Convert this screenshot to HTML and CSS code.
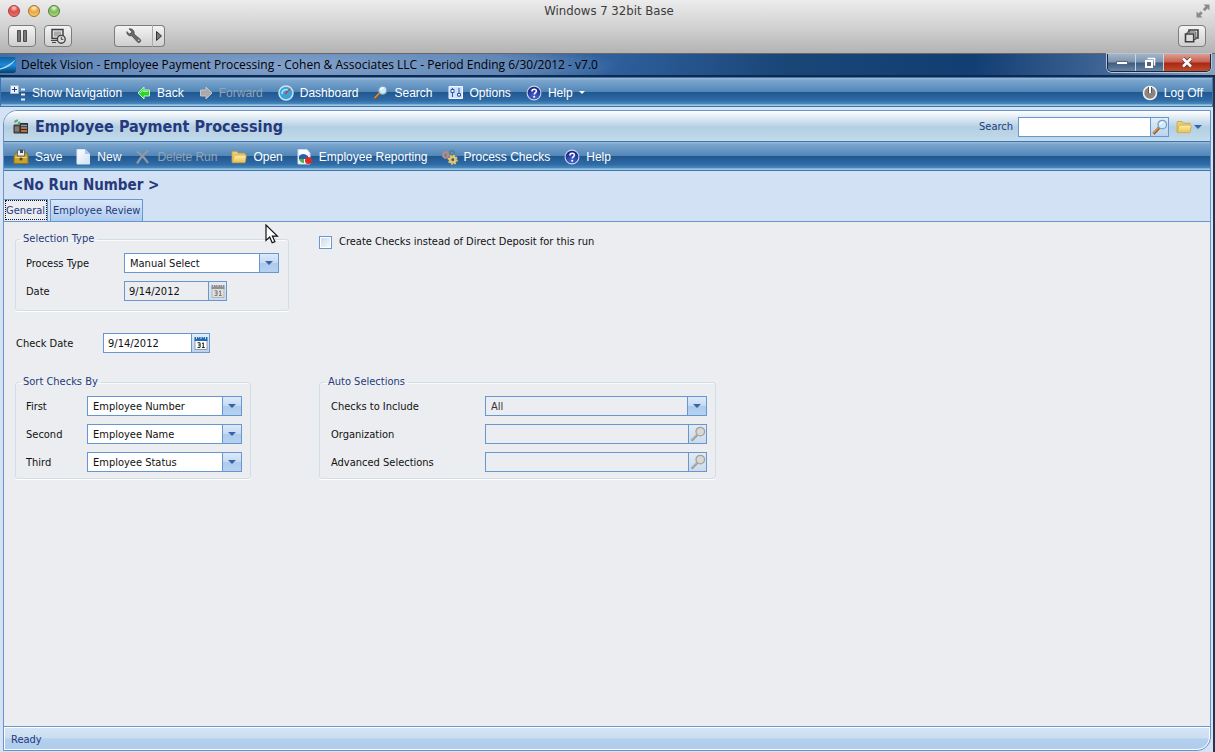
FILE: index.html
```html
<!DOCTYPE html>
<html lang="en">
<head>
<meta charset="utf-8">
<title>Employee Payment Processing</title>
<link rel="stylesheet" href="styles.css">
</head>
<body>
<svg class="defs" width="0" height="0" aria-hidden="true">
  <defs>
    <radialGradient id="blueBall" cx=".5" cy=".8" r=".8"><stop offset="0" stop-color="#4a6ad8"/><stop offset="1" stop-color="#101c78"/></radialGradient>
    <linearGradient id="folderFill" x1="0" y1="0" x2="0" y2="1"><stop offset="0" stop-color="#fdf0a8"/><stop offset="1" stop-color="#e9bf52"/></linearGradient>
    <linearGradient id="sheetFill" x1="0" y1="0" x2="1" y2="1"><stop offset="0" stop-color="#fff"/><stop offset="1" stop-color="#cfe0f2"/></linearGradient>
    <linearGradient id="logoFill" x1="0" y1="0" x2="0" y2="1"><stop offset="0" stop-color="#0f5f9c"/><stop offset=".5" stop-color="#1c8bdc"/><stop offset="1" stop-color="#04406e"/></linearGradient>
    <symbol id="help" viewBox="0 0 16 16"><circle cx="8" cy="8" r="6.9" fill="url(#blueBall)" stroke="#cfd4e4" stroke-width="1.1"/><path d="M5.9 6.4c0-3 4.5-2.9 4.5-.4 0 1.7-2.1 1.7-2.1 3.6" fill="none" stroke="#fff" stroke-width="1.5"/><circle cx="8.2" cy="11.8" r="1" fill="#fff"/></symbol>
    <symbol id="glass" viewBox="0 0 16 16"><path d="M1.5 14.7 7.2 8.8" stroke="#8e5524" stroke-width="2.8"/><path d="M1.5 14 6.7 8.6" stroke="#e39a4e" stroke-width="1.3"/><circle cx="10.3" cy="5.6" r="4.3" fill="#c9ecff" stroke="#7f9fb8" stroke-width="1.3"/><path d="M7.8 5.4q.7-2.4 3.2-2.2" fill="none" stroke="#fff" stroke-width="1.4"/></symbol>
    <symbol id="glassOff" viewBox="0 0 16 16"><path d="M1.5 14.7 7.2 8.8" stroke="#999" stroke-width="2.4"/><path d="M1.5 14 6.7 8.6" stroke="#c6c6c6" stroke-width="1"/><circle cx="10.3" cy="5.6" r="4.3" fill="#d8d8d6" stroke="#a2a2a0" stroke-width="1.3"/></symbol>
    <symbol id="folder" viewBox="0 0 16 14"><path d="M1 12V2.500Q1 1.500 2 1.500h4l1.400 1.700h6q.8 0 .8 1V6" fill="#e9cf72" stroke="#c9a33e" stroke-width=".8"/><path d="M1.200 12.700 3 5.800q.2-.7 1-.7h10.400q1 0 .8 1l-.9 5.800q-.1.8-1 .8z" fill="url(#folderFill)" stroke="#cfa544" stroke-width=".8"/></symbol>
    <symbol id="cal" viewBox="0 0 14 15"><path d="M1 3.500h12v10H1z" fill="#fff" stroke="#7c8796" stroke-width=".8"/><path d="M.5 1h13v4H.5z" fill="#236ab8"/><path d="M2.500 1v2M4.700 1v1M7 1v2M9.300 1v1M11.500 1v2" stroke="#c5daf0"/><path d="M3.500 6.800h2.600v4.600H3.500M4.200 9h1.900M8 7.700l1.300-.9v5M8 11.500h2.700" fill="none" stroke="#222"/></symbol>
    <symbol id="calOff" viewBox="0 0 14 15"><path d="M1 3.500h12v10H1z" fill="#e0e0df" stroke="#aaa" stroke-width=".8"/><path d="M.5 1h13v4H.5z" fill="#909090"/><path d="M2.500 1v2M4.700 1v1M7 1v2M9.300 1v1M11.500 1v2" stroke="#c5c5c5"/><path d="M3.500 6.800h2.600v4.600H3.500M4.200 9h1.900M8 7.700l1.300-.9v5M8 11.500h2.700" fill="none" stroke="#777"/></symbol>
  </defs>
</svg>

<div class="host">
  <header class="host-head">
    <div class="host-title">
      <span class="lights">
        <button class="light red" aria-label="Close"></button>
        <button class="light amber" aria-label="Minimize"></button>
        <button class="light green" aria-label="Zoom"></button>
      </span>
      <span class="host-name">Windows 7 32bit Base</span>
      <button class="expand" aria-label="Full screen"><svg width="14" height="14" viewBox="0 0 14 14"><path d="M7.500.5h6v6l-2-2-2.700 2.700-2-2 2.700-2.700zM.5 7.500v6h6l-2-2 2.200-2.200-2-2-2.200 2.200z" fill="#8a8a8a"/></svg></button>
    </div>
    <div class="host-tools">
      <button class="host-btn" aria-label="Pause"><svg width="12" height="14"><path d="M1.500 1.500h3v11h-3zM7.500 1.500h3v11h-3z" fill="#777" stroke="#4c4c4c"/></svg></button>
      <button class="host-btn" aria-label="Snapshots"><svg width="16" height="16" viewBox="0 0 16 16"><path d="M2 1.500h11v9H2z" fill="#ddd" stroke="#3c3c3c" stroke-width="1.400"/><path d="M4 3.500h7v5H4z" fill="#aaa"/><path d="M1 12.500h6M2 14.500h4" stroke="#444"/><circle cx="11.300" cy="11.300" r="3.900" fill="#ddd" stroke="#444" stroke-width="1.400"/><path d="M11.300 9v2.400h2" fill="none" stroke="#444"/></svg></button>
      <span class="host-pair">
        <button class="host-btn settings" aria-label="Settings"><svg width="16" height="16" viewBox="0 0 16 16"><path d="M3 .9 5.700 3.600 5 5.300l-1.800.6L.8 3.600C.6 6.400 2.800 8.500 5.800 7.800l5.400 6c1.900 2.100 4.900-.5 2.900-2.600L8 6.100C8.900 2.800 6.200.2 3 .9z" fill="#696969" stroke="#444" stroke-width=".7"/><circle cx="12.700" cy="12.300" r=".8" fill="#ddd"/></svg></button>
        <button class="host-btn more" aria-label="More settings"><svg width="6" height="10"><path d="M.5.5v9l5-4.500z" fill="#777" stroke="#333"/></svg></button>
      </span>
      <button class="host-btn unity" aria-label="Windows"><svg width="16" height="14" viewBox="0 0 16 14"><path d="M5 3.500V1h9v8h-2.500" fill="none" stroke="#3d3d3d" stroke-width="1.600"/><path d="M3.200 5V3h8.600v7.500H10" fill="none" stroke="#555"/><path d="M1.500 5h8.200v7.800H1.500z" fill="#ddd" stroke="#3d3d3d" stroke-width="1.600"/></svg></button>
    </div>
  </header>

  <div class="win-title">
    <svg class="logo" width="16" height="16" viewBox="0 0 16 16"><path d="M0 0h13q3 0 3 3v10q0 3-3 3H0z" fill="url(#logoFill)"/><path d="M0 11.500Q9 8.500 16 2 11 10.500 0 12.800z" fill="#a9dcfa"/></svg>
    <span class="win-name">Deltek Vision - Employee Payment Processing - Cohen &amp; Associates LLC - Period Ending 6/30/2012 - v7.0</span>
    <div class="win-btns">
      <button aria-label="Minimize"><svg width="12" height="6"><path d="M.5 1.500h11v3H.5z" fill="#fff" stroke="#536579"/></svg></button>
      <button aria-label="Restore"><svg width="12" height="12"><path d="M3.500 1.500h7v7" fill="none" stroke="#fff" stroke-width="1.500"/><path d="M2 4h6v6H2z" fill="#53657c" stroke="#fff" stroke-width="2"/></svg></button>
      <button class="close" aria-label="Close window"><svg width="12" height="11"><path d="m2 1.500 8 8m0-8-8 8" stroke="#62322e" stroke-width="4"/><path d="m2 1.500 8 8m0-8-8 8" stroke="#fff" stroke-width="2.500"/></svg></button>
    </div>
  </div>

  <div class="app">
    <nav class="bar main-bar">
      <button><svg width="16" height="16"><path d="M.5.500h8v8h-8z" fill="#eef3fb" stroke="#9eb2cc"/><path d="M4.500 2v5M2 4.500h5" stroke="#223f90"/><path d="M11 4.500h4M11 9.500h4M11 14.500h4" stroke="#e8edf3" stroke-width="2"/></svg>Show Navigation</button>
      <button><svg width="14" height="14" viewBox="0 0 14 14"><path d="M1 7 7 1v3h5.500v6H7v3z" fill="#2bd52f" stroke="#c4f2bd"/><path d="m3 7 3-3v1.500h5" fill="none" stroke="#9bf795"/></svg>Back</button>
      <button disabled><svg width="14" height="14" viewBox="0 0 14 14"><path d="M13 7 7 1v3H1.500v6H7v3z" fill="#aaa" stroke="#c4c4c4"/></svg>Forward</button>
      <button><svg width="16" height="16" viewBox="0 0 16 16"><circle cx="8" cy="8" r="7" fill="#35a5dc" stroke="#cce4ee" stroke-width="1.500"/><path d="M4 9a4 4 0 0 1 7-3" fill="none" stroke="#a4e5ff" stroke-width="1.500"/><path d="m7 9 5-5" stroke="#d33" stroke-width="1.500"/></svg>Dashboard</button>
      <button><svg width="15" height="15"><use href="#glass"/></svg>Search</button>
      <button><svg width="16" height="16"><path d="M1 1.500h13.500v12H1z" fill="#cfe0f8" stroke="#f2f7ff"/><path d="M4.500 3v9M11 3v9" stroke="#2c57a8"/><path d="M3 4.500h3v3H3zM9.500 8.500h3v2.500h-3z" fill="#fff" stroke="#2b54a9"/></svg>Options</button>
      <button><svg width="16" height="16"><use href="#help"/></svg>Help<i class="caret"></i></button>
      <button class="end"><svg width="16" height="16"><circle cx="8" cy="8" r="6.500" fill="#8a8580" stroke="#f4f0e8" stroke-width="1.600"/><path d="M8 2v6" stroke="#5a5653" stroke-width="4"/><path d="M8 1v7" stroke="#fff" stroke-width="2"/></svg>Log Off</button>
    </nav>

    <main class="panel">
      <div class="panel-head">
        <svg width="16" height="16"><path d="M1 6h6v8H1z" fill="#6c6258" stroke="#37302b"/><path d="M7 4h8v10.500H7z" fill="#36302e"/><path d="M2 3.500q0-2 3-2M5 5l2-2" fill="none" stroke="#5ba968" stroke-width="2"/><path d="M8 6.500h6" stroke="#6aa5e8" stroke-width="1.500"/><path d="M8 9h6M8 12h6" stroke="#e38343" stroke-width="1.500"/><path d="M3 8v4M5 8v4" stroke="#9b958c"/></svg>
        <h1>Employee Payment Processing</h1>
        <label for="find">Search</label>
        <span class="field find"><input id="find" type="text"><button aria-label="Find"><svg width="16" height="16"><use href="#glass"/></svg></button></span>
        <button class="fav" aria-label="Folders"><svg width="16" height="14"><use href="#folder"/></svg><i class="caret"></i></button>
      </div>
      <div class="bar">
        <button><svg width="16" height="16"><path d="M1 6.500 3 4h11l1 2.500v8H1z" fill="#c8a42e" stroke="#8b741b"/><path d="M4.500 1h7v6h-7z" fill="#eceef0" stroke="#656a70"/><path d="M7 1h3v3H7z" fill="#454b52"/><path d="M2 8.500h12" stroke="#f0d879"/><circle cx="8" cy="10" r="1.500" fill="#544716"/></svg>Save</button>
        <button><svg width="15" height="16"><path d="M1 .5h8L13.500 5v10H1z" fill="url(#sheetFill)" stroke="#d8e7f6"/><path d="M9 .5V5h4.500z" fill="#a9c7e6"/></svg>New</button>
        <button disabled><svg width="16" height="16"><path d="M2 2.500q6 4 11 11.500M13.500 1.500Q7 6 2 14.500" fill="none" stroke="#8d99a6" stroke-width="2.200"/></svg>Delete Run</button>
        <button><svg width="16" height="14"><use href="#folder"/></svg>Open</button>
        <button><svg width="16" height="16"><path d="M1 .5h9L13 4v11H1z" fill="#f8fbff" stroke="#cbdceb"/><path d="M2 7q4-4 9 0v3H2z" fill="#2c5ea8"/><path d="M2 10h5v4q-4 0-5-4z" fill="#4caf50"/><circle cx="11.500" cy="11.500" r="3.500" fill="#db2b25"/></svg>Employee Reporting</button>
        <button><svg width="16" height="16"><circle cx="3.800" cy="6" r="2.400" fill="none" stroke="#b98a84" stroke-width="2"/><circle cx="3.800" cy="6" r="3.700" fill="none" stroke="#b98a84" stroke-dasharray="1.500 1.400"/><circle cx="10" cy="4" r="2.200" fill="none" stroke="#587f8f" stroke-width="1.500"/><circle cx="10.800" cy="10.800" r="2.700" fill="none" stroke="#e4c66c" stroke-width="2.500"/><circle cx="10.800" cy="10.800" r="4.400" fill="none" stroke="#e4c66c" stroke-width="1.400" stroke-dasharray="1.800 1.600"/></svg>Process Checks</button>
        <button><svg width="16" height="16"><use href="#help"/></svg>Help</button>
      </div>
      <div class="run">
        <h2>&lt;No Run Number &gt;</h2>
        <div class="tabs" role="tablist">
          <button class="tab active" role="tab" aria-selected="true">General</button>
          <button class="tab" role="tab" aria-selected="false">Employee Review</button>
        </div>
      </div>

      <form class="content">
        <fieldset class="group selection">
          <legend>Selection Type</legend>
          <label for="ptype">Process Type</label>
          <span class="combo"><select id="ptype"><option>Manual Select</option></select></span>
          <label for="pdate">Date</label>
          <span class="field date"><input id="pdate" type="text" value="9/14/2012" disabled><button type="button" disabled aria-label="Pick date"><svg width="14" height="15"><use href="#calOff"/></svg></button></span>
        </fieldset>
        <label class="direct"><input type="checkbox">Create Checks instead of Direct Deposit for this run</label>
        <div class="check-date">
          <label for="cdate">Check Date</label>
          <span class="field"><input id="cdate" type="text" value="9/14/2012"><button type="button" aria-label="Pick check date"><svg width="14" height="15"><use href="#cal"/></svg></button></span>
        </div>
        <fieldset class="group sort">
          <legend>Sort Checks By</legend>
          <label for="s1">First</label>
          <span class="combo"><select id="s1"><option>Employee Number</option></select></span>
          <label for="s2">Second</label>
          <span class="combo"><select id="s2"><option>Employee Name</option></select></span>
          <label for="s3">Third</label>
          <span class="combo"><select id="s3"><option>Employee Status</option></select></span>
        </fieldset>
        <fieldset class="group auto">
          <legend>Auto Selections</legend>
          <label for="inc">Checks to Include</label>
          <span class="combo"><select id="inc" disabled><option>All</option></select></span>
          <label for="org">Organization</label>
          <span class="field"><input id="org" type="text" disabled><button type="button" disabled aria-label="Find organization"><svg width="16" height="16"><use href="#glassOff"/></svg></button></span>
          <label for="adv">Advanced Selections</label>
          <span class="field"><input id="adv" type="text" disabled><button type="button" disabled aria-label="Find selections"><svg width="16" height="16"><use href="#glassOff"/></svg></button></span>
        </fieldset>
      </form>
      <footer class="status">Ready</footer>
    </main>
  </div>
</div>
<svg class="pointer" width="15" height="21" viewBox="0 0 15 21" aria-hidden="true"><path d="M1 1v15.500l3.700-3.400 2.500 5.700 2.700-1.200-2.500-5.500h5z" fill="#fff" stroke="#111" stroke-width="1.200"/></svg>
</body>
</html>
```
FILE: styles.css
```css
* { box-sizing: border-box; }
body {
  margin: 0;
  font: 11px/14px "DejaVu Sans Condensed", "Noto Sans", sans-serif;
  color: #111;
}
button, input, select { font: inherit; color: inherit; margin: 0; padding: 0; border: 0; border-radius: 0; background: none; }
svg { flex: none; display: block; }
.defs { position: absolute; }
h1, h2 { margin: 0; color: #26397c; font-weight: bold; }

.host { min-height: 100vh; display: flex; flex-direction: column; }
.host-head {
  height: 54px;
  padding: 0 5px 0 8px;
  background: linear-gradient(#ececec, #d2d2d2 50%, #b3b3b3);
  border-bottom: 1px solid #686868;
}
.host-title { display: grid; grid-template-columns: 60px 1fr 60px; align-items: center; height: 21px; }
.lights { display: flex; gap: 8px; }
.light { width: 12px; height: 12px; border-radius: 50%; border: 1px solid #7a5a55; }
.red { background: radial-gradient(circle at 50% 20%, #fbd0cc, #e04848 45%, #f58a80); border-color: #98433f; }
.amber { background: radial-gradient(circle at 50% 20%, #fff0c8, #eda63e 45%, #fbdc80); border-color: #a2702f; }
.green { background: radial-gradient(circle at 50% 20%, #e4fad0, #7db955 45%, #c0e890); border-color: #4f7d3b; }
.host-name { text-align: center; font: 13px/20px "DejaVu Sans Condensed", sans-serif; color: #3c3c3c; }
.expand { justify-self: end; }
.host-tools { display: flex; align-items: center; gap: 8px; padding-top: 4px; }
.host-btn {
  width: 28px; height: 22px;
  display: grid; place-items: center;
  border: 1px solid #7d7d7d;
  border-radius: 4px;
  background: linear-gradient(#f4f4f4, #cfcfcf);
}
.host-pair { display: flex; margin-left: 34px; }
.settings { width: 38px; border-right: 0; border-radius: 4px 0 0 4px; }
.more { width: 13px; border-left-color: #aaa; border-radius: 0 4px 4px 0; }
.unity { margin-left: auto; margin-right: 4px; }

.win-title {
  display: flex;
  height: 23px;
  background:
    radial-gradient(ellipse 330px 30px at 290px 12px, rgba(135, 165, 205, .95), rgba(110, 145, 190, .8) 70%, transparent),
    linear-gradient(100deg, #3a68a4, #2f609d 50%, #194577 65%, #123e73 80%, #45699a 92%, #8aa2bd);
  border-bottom: 2px solid #14284a;
  padding-right: 4px;
}
.logo { margin-top: 3px; }
.win-name { margin-left: 5px; font: 12px/21px "Open Sans", sans-serif; color: #000; white-space: nowrap; }
.win-btns {
  display: flex;
  margin-left: auto;
  height: 18px;
  border: 1px solid #18273b;
  border-top: 0;
  border-radius: 0 0 5px 5px;
  overflow: hidden;
  box-shadow: 0 0 0 1px #b6c5d8;
}
.win-btns button {
  width: 28px;
  display: grid; place-items: center;
  background: linear-gradient(#a3b4c8, #7e93ad 48%, #3e5a7d 52%, #6886a8);
  border-right: 1px solid #c9d4e0;
}
.win-btns .close { width: 46px; border: 0; background: linear-gradient(#dc9d91, #c9604f 48%, #a82713 52%, #c04c2b); }

.app {
  flex: 1;
  display: flex;
  flex-direction: column;
  background: #d4e2f4;
  border-right: 2px solid #26354c;
}
.bar {
  display: flex;
  align-items: center;
  gap: 14px;
  height: 30px;
  padding: 1px 9px 0;
  border: solid #3d75b1;
  border-width: 1px 0;
  background: linear-gradient(#9dbddb, #7ba5cd 8%, #5287b9 49%, #21578f 51%, #2f6ba7 80%, #4988bd 92%, #97c6df 96%);
  color: #fff;
  font: 12px/16px "Liberation Sans", sans-serif;
}
.bar button { display: flex; align-items: center; gap: 6px; white-space: nowrap; }
.bar button:disabled { color: #94a3b2; }
.bar .end { margin-left: auto; }
.caret { border: 3px solid transparent; border-top: 3px solid currentColor; border-bottom: 0; }
.main-bar { gap: 15px; border-width: 1px; }

.panel {
  flex: 1;
  display: flex;
  flex-direction: column;
  margin: 3px 2px 1px 3px;
  border: 1px solid #6795cb;
  border-radius: 14px 0 14px 0;
  overflow: hidden;
}
.panel-head {
  display: flex;
  align-items: center;
  height: 30px;
  padding: 1px 8px 0 9px;
  background: linear-gradient(#fff, #dbe8f2 25%, #b9d3e6 50%, #b2cfe3 55%, #c4dbe9);
  color: #26397c;
}
.panel-head h1 { margin: 0 auto 0 6px; font-size: 16px; line-height: 22px; }
.fav { display: flex; align-items: center; gap: 2px; margin-left: 7px; color: #3a62a8; }
.fav .caret, .combo::after { border-width: 4px 4px 0; }

.field { display: flex; height: 20px; border: 1px solid #6797d0; background: #fff; }
.field input { flex: 1; min-width: 0; width: 0; padding: 2px 4px 0; }
.field button {
  width: 18px;
  display: grid; place-items: center;
  border-left: 1px solid #6797d0;
  background: linear-gradient(#e2edf9, #b9d3f0);
}
.field:has(input:disabled) { background: #ebedf0; }
.field button:disabled { background: linear-gradient(#e4eaf1, #cbdbed); }
.find { width: 151px; margin-left: 5px; }
.date { width: 103px; }

.run { height: 51px; display: flex; flex-direction: column; background: #d3e1f4; border-bottom: 1px solid #6797d0; }
.run h2 { padding: 3px 8px 0; font-size: 15px; line-height: 22px; }
.tabs { display: flex; gap: 2px; height: 22px; margin-top: auto; }
.tab { padding: 0 2px; color: #26397c; border: 1px solid #6797d0; border-bottom: 0; background: linear-gradient(#d9e7f8, #aecbee); white-space: nowrap; }
.active { background: #ebedf0; border-left: 0; outline: 1px dotted #111; outline-offset: -2px; }

.content {
  flex: 1;
  display: grid;
  grid-template-columns: 304px auto;
  justify-content: start;
  align-content: start;
  padding: 10px 11px;
  background: #ebedf0;
}
.group {
  display: grid;
  align-items: center;
  gap: 8px 0;
  min-width: 0;
  margin: 0;
  padding: 7px 9px 6px 10px;
  border: 1px solid #d2dee6;
  border-radius: 3px;
  box-shadow: 0 1px #fff, inset 0 1px #f8fafb;
}
.group legend { margin-left: -6px; padding: 0 3px; color: #26397c; }
.group label, .check-date label { padding-top: 2px; }
.group, .direct, .check-date { justify-self: start; }
.selection { grid-template-columns: 98px 155px; padding-bottom: 9px; }
.sort { grid-template-columns: 61px 155px; padding-right: 8px; }
.auto { grid-template-columns: 154px 222px; padding: 7px 8px 6px 11px; }
.combo { position: relative; display: flex; height: 20px; }
.combo select { width: 100%; appearance: none; padding: 1px 24px 0 5px; border: 1px solid #6797d0; background: #fff; }
.combo select:disabled { background: #ebedf0; color: #333; opacity: 1; }
.combo::before {
  content: "";
  position: absolute;
  inset: 1px 1px 1px auto;
  width: 18px;
  border-left: 1px solid #6797d0;
  background: linear-gradient(#dce9f8, #c4daf3 50%, #adcaec 52%, #b6d2f0);
  pointer-events: none;
}
.combo::after { content: ""; position: absolute; right: 6px; top: 8px; border-style: solid; border-color: #3a62a8 transparent transparent; pointer-events: none; }
.direct { display: flex; gap: 7px; height: 20px; align-items: center; }
.direct input { appearance: none; width: 13px; height: 13px; border: 1px solid #6797d0; background: linear-gradient(135deg, #c9d8e8, #f8fafc); box-shadow: inset 0 0 0 1px #fff; }
.check-date { grid-column: 1 / -1; display: grid; grid-template-columns: 87px 107px; align-items: center; margin: 22px 0 22px 1px; }
.status {
  height: 23px;
  padding: 1px 6px 0;
  line-height: 21px;
  color: #26397c;
  border: 1px solid #fff;
  border-radius: 0 0 13px 0;
  box-shadow: 0 -1px #6797d0;
  background: linear-gradient(#d4e4f3, #cadef2 48%, #b2d0ee 52%, #b0ccee);
}
.pointer { position: absolute; left: 265px; top: 224px; }
```
